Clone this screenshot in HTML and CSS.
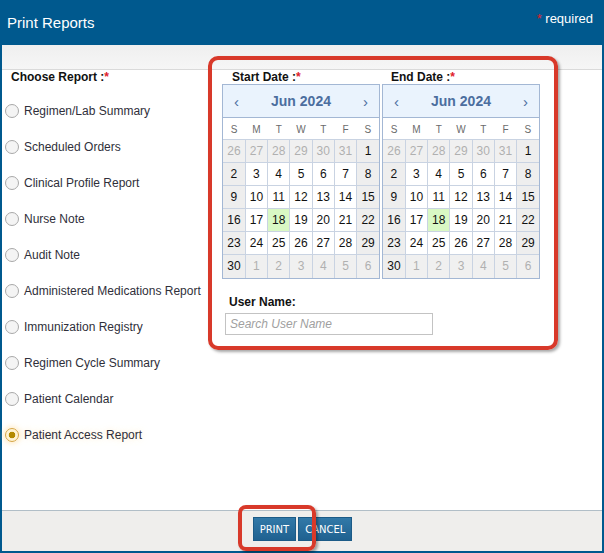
FILE: index.html
```html
<!DOCTYPE html>
<html>
<head>
  <meta charset="UTF-8">
  <meta name="viewport" content="width=device-width, initial-scale=1">
  <title>Print Reports</title>
  <link rel="stylesheet" href="styles.css">
</head>
<body>
  <div class="dialog">
    <div class="header">
      <div class="header-title">Print Reports</div>
      <div class="header-req"><span class="star">*</span> required</div>
    </div>
    <div class="band"></div>
    <div class="main">
      <div class="reports">
        <div class="field-label">Choose Report :<span class="star">*</span></div>
        <div class="report-list">
          <label class="report"><input type="radio" name="rep" class="radio"> Regimen/Lab Summary</label>
          <label class="report"><input type="radio" name="rep" class="radio"> Scheduled Orders</label>
          <label class="report"><input type="radio" name="rep" class="radio"> Clinical Profile Report</label>
          <label class="report"><input type="radio" name="rep" class="radio"> Nurse Note</label>
          <label class="report"><input type="radio" name="rep" class="radio"> Audit Note</label>
          <label class="report"><input type="radio" name="rep" class="radio"> Administered Medications Report</label>
          <label class="report"><input type="radio" name="rep" class="radio"> Immunization Registry</label>
          <label class="report"><input type="radio" name="rep" class="radio"> Regimen Cycle Summary</label>
          <label class="report"><input type="radio" name="rep" class="radio"> Patient Calendar</label>
          <label class="report selected"><input type="radio" name="rep" class="radio" checked> Patient Access Report</label>
        </div>
      </div>

      <div class="dates">
        <div class="cal-pair">
          <div class="cal-col">
            <div class="field-label cal-label">Start Date :<span class="star">*</span></div>
            <div class="calendar">
              <div class="cal-head"><span class="arrow">&#8249;</span><span class="month">Jun 2024</span><span class="arrow">&#8250;</span></div>
              <div class="cal-days"><span>S</span><span>M</span><span>T</span><span>W</span><span>T</span><span>F</span><span>S</span></div>
              <table class="cal-grid">
                <tr><td class="off">26</td><td class="off">27</td><td class="off">28</td><td class="off">29</td><td class="off">30</td><td class="off">31</td><td class="we">1</td></tr>
                <tr><td class="we">2</td><td>3</td><td>4</td><td>5</td><td>6</td><td>7</td><td class="we">8</td></tr>
                <tr><td class="we">9</td><td>10</td><td>11</td><td>12</td><td>13</td><td>14</td><td class="we">15</td></tr>
                <tr><td class="we">16</td><td>17</td><td class="today">18</td><td>19</td><td>20</td><td>21</td><td class="we">22</td></tr>
                <tr><td class="we">23</td><td>24</td><td>25</td><td>26</td><td>27</td><td>28</td><td class="we">29</td></tr>
                <tr><td class="we">30</td><td class="off">1</td><td class="off">2</td><td class="off">3</td><td class="off">4</td><td class="off">5</td><td class="off">6</td></tr>
              </table>
            </div>
          </div>
          <div class="cal-col">
            <div class="field-label cal-label end">End Date :<span class="star">*</span></div>
            <div class="calendar">
              <div class="cal-head"><span class="arrow">&#8249;</span><span class="month">Jun 2024</span><span class="arrow">&#8250;</span></div>
              <div class="cal-days"><span>S</span><span>M</span><span>T</span><span>W</span><span>T</span><span>F</span><span>S</span></div>
              <table class="cal-grid">
                <tr><td class="off">26</td><td class="off">27</td><td class="off">28</td><td class="off">29</td><td class="off">30</td><td class="off">31</td><td class="we">1</td></tr>
                <tr><td class="we">2</td><td>3</td><td>4</td><td>5</td><td>6</td><td>7</td><td class="we">8</td></tr>
                <tr><td class="we">9</td><td>10</td><td>11</td><td>12</td><td>13</td><td>14</td><td class="we">15</td></tr>
                <tr><td class="we">16</td><td>17</td><td class="today">18</td><td>19</td><td>20</td><td>21</td><td class="we">22</td></tr>
                <tr><td class="we">23</td><td>24</td><td>25</td><td>26</td><td>27</td><td>28</td><td class="we">29</td></tr>
                <tr><td class="we">30</td><td class="off">1</td><td class="off">2</td><td class="off">3</td><td class="off">4</td><td class="off">5</td><td class="off">6</td></tr>
              </table>
            </div>
          </div>
        </div>
        <div class="field-label user-label">User Name:</div>
        <input type="text" class="user-input" placeholder="Search User Name">
      </div>
    </div>
    <div class="footer">
      <button class="btn">PRINT</button>
      <button class="btn">CANCEL</button>
    </div>

    <!-- red review markers drawn over the dialog -->
    <div class="marker marker-dates"></div>
    <div class="marker marker-print"></div>
  </div>
</body>
</html>
```

FILE: styles.css
```css
* {
  box-sizing: border-box;
}
body {
  margin: 0;
  font-family: "Liberation Sans", Arial, sans-serif;
  background: #ffffff;
}
.dialog {
  position: relative;
  width: 604px;
  height: 553px;
  display: flex;
  flex-direction: column;
  border: 2px solid #00598e;
  border-top: none;
  background: #ffffff;
}
.header {
  height: 45px;
  margin: 0 -2px;
  padding: 0 11px 0 7px;
  background: #00598e;
  color: #ffffff;
  display: flex;
  justify-content: space-between;
}
.header-title {
  font-size: 15px;
  line-height: 45px;
}
.header-req {
  font-size: 13px;
  line-height: 16px;
  margin-top: 11px;
}
.star {
  color: #e0202a;
}
.band {
  height: 25px;
  background: linear-gradient(#efefef, #f6f6f6);
  border-bottom: 1px solid #dadada;
}
.main {
  flex: 1;
  display: flex;
}
.reports {
  width: 220px;
}
.field-label {
  font-size: 12px;
  font-weight: bold;
  line-height: 14px;
  color: #111111;
}
.reports .field-label {
  padding-left: 9px;
}
.report-list {
  margin-top: 9px;
  display: flex;
  flex-direction: column;
}
.report {
  height: 36px;
  display: flex;
  align-items: center;
  gap: 5px;
  padding-left: 3px;
  font-size: 12px;
  color: #2f2f3a;
}
.radio {
  appearance: none;
  -webkit-appearance: none;
  width: 14px;
  height: 14px;
  margin: 0;
  border-radius: 50%;
  border: 1px solid #a9a9a9;
  background: #f4f4f4;
}
.radio:checked {
  border-color: #d6a545;
  background: radial-gradient(circle, #b48a00 0 3px, #fff3d2 3.6px);
  box-shadow: 0 0 5px 2px rgba(255, 214, 140, 0.45);
}
.selected {
  text-shadow: 0 0 6px rgba(255, 220, 160, 0.6);
}
.dates {
  display: flex;
  flex-direction: column;
}
.cal-pair {
  display: flex;
  gap: 2px;
}
.cal-col {
  width: 158px;
}
.cal-label {
  padding-left: 10px;
}
.cal-label.end {
  padding-left: 9px;
}
.calendar {
  border: 1px solid #a3b7d4;
  background: #ffffff;
}
.cal-head {
  height: 33px;
  padding: 0 11px;
  background: #eaf3fd;
  border-bottom: 1px solid #a3b7d4;
  display: flex;
  align-items: center;
  justify-content: space-between;
  color: #4c6e9f;
}
.arrow {
  font-size: 15px;
}
.month {
  font-size: 14px;
  font-weight: bold;
}
.cal-days {
  height: 21px;
  padding-top: 2px;
  display: grid;
  grid-template-columns: repeat(7, 1fr);
  align-items: center;
  text-align: center;
  font-size: 10px;
  color: #6b6b6b;
}
.cal-grid {
  width: 100%;
  border-collapse: collapse;
  table-layout: fixed;
}
.cal-grid td {
  height: 23px;
  padding: 0;
  border: 1px solid #c9d3e2;
  text-align: center;
  font-size: 12px;
  color: #111111;
}
.cal-grid td:first-child {
  border-left: none;
}
.cal-grid td:last-child {
  border-right: none;
}
.cal-grid tr:last-child td {
  border-bottom: none;
}
.cal-grid td.we {
  background: #eeeeee;
}
.cal-grid td.off {
  background: #f0f0f0;
  color: #b0b0b0;
}
.cal-grid td.today {
  background: #d9f8c4;
}
.user-label {
  margin-top: 16px;
  padding-left: 7px;
}
.user-input {
  margin: 4px 0 0 3px;
  width: 208px;
  height: 22px;
  border: 1px solid #c3c3c3;
  padding: 0 4px;
  font-family: "Liberation Sans", Arial, sans-serif;
  font-size: 12px;
}
.user-input::placeholder {
  color: #a0a0a0;
  font-style: italic;
}
.footer {
  height: 41px;
  padding-top: 6px;
  border-top: 1px solid #b1bec7;
  background: #efeeec;
  display: flex;
  justify-content: center;
  align-items: flex-start;
  gap: 2px;
}
.btn {
  height: 24px;
  padding: 0 6px;
  border: 1px solid #1c5b87;
  background: linear-gradient(#3279a8, #1f6190);
  color: #ffffff;
  font-family: "DejaVu Sans", Verdana, sans-serif;
  font-size: 10px;
  cursor: pointer;
}
.btn:first-child {
  margin-left: 1px;
}
.marker {
  position: absolute;
  border: 4px solid #d8392a;
  border-radius: 10px;
  box-shadow: 2px 2px 3px rgba(0, 0, 0, 0.35);
}
.marker-dates {
  left: 206px;
  top: 56px;
  width: 350px;
  height: 294px;
}
.marker-print {
  left: 236px;
  top: 505px;
  width: 78px;
  height: 46px;
  border-radius: 8px;
}
```
